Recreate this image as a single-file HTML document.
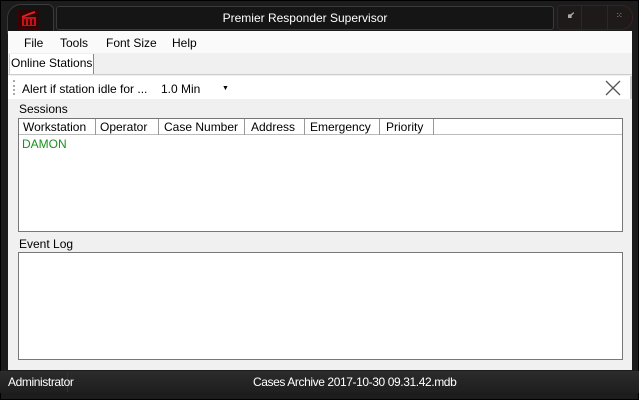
<!DOCTYPE html><html><head><style>
*{margin:0;padding:0;box-sizing:border-box}
body{width:639px;height:400px;background:#1b1b1b;font-family:"Liberation Sans",sans-serif;font-size:12px;position:relative;overflow:hidden;color:#000}
.a{position:absolute}
</style></head><body>
<div class="a" style="left:0;top:0;width:639px;height:400px;border:1px solid #000;background:#1c1c1c"></div>
<div class="a" style="left:7px;top:4px;width:47px;height:30px;border:1px solid #3a3a3a;border-radius:14px 6px 0 0;background:#141414"></div>
<div class="a" style="left:18px;top:9px;width:22px;height:20px;background:#2a0606;border:1px solid #400"></div>
<svg class="a" style="left:20px;top:11px" width="18" height="16"><rect x="2" y="6" width="14" height="9" fill="#c4121a"/><rect x="4" y="8" width="2" height="6" fill="#400"/><rect x="8" y="8" width="2" height="6" fill="#400"/><rect x="12" y="8" width="2" height="6" fill="#400"/><path d="M2 6 L9 3 L15 1" stroke="#e02020" stroke-width="2" fill="none"/></svg>
<div class="a" style="left:56px;top:6px;width:498px;height:24px;border:1px solid #3a3a3a;border-radius:3px;background:#151515;color:#fff;font-size:12px;text-align:center;line-height:22px">Premier Responder Supervisor</div>
<div class="a" style="left:557px;top:5px;width:76px;height:25px;border:1px solid #3a2222;border-radius:3px 12px 12px 3px;background:#1e1a1a"></div>
<div class="a" style="left:581px;top:6px;width:1px;height:23px;background:#3a2222"></div>
<div class="a" style="left:607px;top:6px;width:1px;height:23px;background:#3a2222"></div>
<div class="a" style="left:568px;top:12px;width:6px;height:6px;background:#aaa;clip-path:polygon(0 40%,40% 40%,100% 0,100% 20%,60% 60%,60% 100%,0 100%)"></div>
<div class="a" style="left:616px;top:12px;color:#bbb;font-size:8px;line-height:8px">⁙</div>
<div class="a" style="left:8px;top:31px;width:624px;height:339px;background:#f0f0f0"></div>
<div class="a" style="left:8px;top:31px;width:624px;height:22px;background:#fafafa"></div>
<div class="a" style="left:24px;top:36px;font-size:12px">File</div>
<div class="a" style="left:60px;top:36px">Tools</div>
<div class="a" style="left:106px;top:36px">Font Size</div>
<div class="a" style="left:172px;top:36px">Help</div>
<div class="a" style="left:9px;top:54px;width:85px;height:21px;background:#fff;border-right:1px solid #888;border-left:1px solid #ccc;font-size:12px;line-height:18px;padding-left:1px">Online Stations</div>
<div class="a" style="left:8px;top:74px;width:624px;height:1px;background:#ccc"></div>
<div class="a" style="left:8px;top:76px;width:624px;height:23px;background:#fff;border-right:2px solid #ccc"></div>
<div class="a" style="left:13px;top:80px;width:2px;height:15px;border-left:2px dotted #aaa"></div>
<div class="a" style="left:22px;top:82px">Alert if station idle for ...</div>
<div class="a" style="left:157px;top:78px;width:77px;height:19px;background:#fff"></div>
<div class="a" style="left:161px;top:82px">1.0 Min</div>
<div class="a" style="left:222px;top:85px;font-size:7px">▼</div>
<svg class="a" style="left:605px;top:80px" width="16" height="16"><path d="M1 1L15 15M15 1L1 15" stroke="#555" stroke-width="1.3"/></svg>
<div class="a" style="left:19px;top:102px">Sessions</div>
<div class="a" style="left:18px;top:118px;width:605px;height:114px;background:#fff;border:1px solid #777"></div>
<div class="a" style="left:19px;top:119px;width:603px;height:16px;background:#fff;border-bottom:1px solid #bbb"></div>
<div class="a" style="left:19px;top:119px;height:16px;font-size:12px;line-height:16px;display:flex">
<div style="width:77px;border-right:1px solid #999;padding-left:4px">Workstation</div>
<div style="width:63px;border-right:1px solid #999;padding-left:4px">Operator</div>
<div style="width:86px;border-right:1px solid #999;padding-left:5px">Case Number</div>
<div style="width:60px;border-right:1px solid #999;padding-left:6px">Address</div>
<div style="width:75px;border-right:1px solid #999;padding-left:5px">Emergency</div>
<div style="width:54px;border-right:1px solid #999;padding-left:6px">Priority</div>
</div>
<div class="a" style="left:22px;top:137px;color:#19921b">DAMON</div>
<div class="a" style="left:19px;top:237px">Event Log</div>
<div class="a" style="left:18px;top:252px;width:605px;height:108px;background:#fff;border:1px solid #777"></div>
<div class="a" style="left:0;top:371px;width:639px;height:22px;background:linear-gradient(#2c2c2c,#1e1e1e)"></div>
<div class="a" style="left:67px;top:372px;width:1px;height:20px;background:#333"></div>
<div class="a" style="left:8px;top:375px;color:#fff;letter-spacing:-0.4px">Administrator</div>
<div class="a" style="left:253px;top:375px;color:#fff;letter-spacing:-0.4px">Cases Archive 2017-10-30 09.31.42.mdb</div>
</body></html>
